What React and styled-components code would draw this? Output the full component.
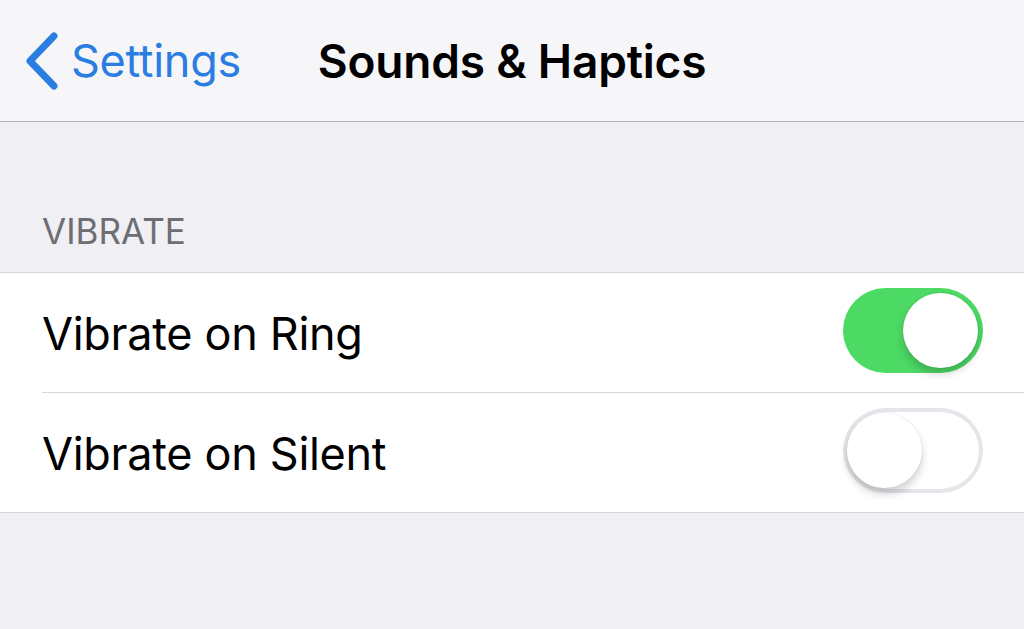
import React, { useState } from 'react';
import styled, { createGlobalStyle } from 'styled-components';

const GlobalStyle = createGlobalStyle`
  html, body {
    margin: 0;
    padding: 0;
    background: #efeff4;
    font-family: Inter, "Liberation Sans", sans-serif;
  }
`;

const Page = styled.div`
  width: 1024px;
  height: 629px;
  background: #efeff4;
  overflow: hidden;
`;

const NavBar = styled.div`
  display: grid;
  grid-template-columns: 1fr auto 1fr;
  align-items: center;
  height: 121px;
  background: #f6f6f8;
  border-bottom: 1px solid #b4b4b8;
`;

const BackButton = styled.div`
  display: flex;
  align-items: center;
  gap: 11px;
  padding-left: 24px;
  color: #2a7de1;
  font-size: 45px;
  letter-spacing: -0.3px;
`;

const Title = styled.div`
  font-size: 46px;
  font-weight: 600;
  color: #000;
  letter-spacing: -0.2px;
`;

const SectionHeader = styled.div`
  height: 151px;
  display: flex;
  align-items: flex-end;
  padding: 0 0 20px 42px;
  box-sizing: border-box;
  font-size: 35px;
  color: #6d6d72;
  letter-spacing: 0;
  border-bottom: 1px solid #d6d6da;
`;

const Group = styled.div`
  background: #fff;
  border-bottom: 1px solid #d6d6da;
`;

const Row = styled.div`
  display: flex;
  align-items: center;
  justify-content: space-between;
  height: 119px;
  padding-right: 41px;
  margin-left: 42px;
  border-bottom: ${p => (p.last ? 'none' : '1px solid #d8d8dc')};
`;

const Label = styled.div`
  font-size: 45px;
  color: #000;
  letter-spacing: -0.3px;
  margin-top: 2px;
`;

const Track = styled.div`
  position: relative;
  width: 140px;
  height: 85px;
  border-radius: 43px;
  box-sizing: border-box;
  background: ${p => (p.on ? '#4cd964' : '#fff')};
  box-shadow: ${p => (p.on ? 'none' : 'inset 0 0 0 4px #e5e5ea')};
  margin-top: -4px;
  cursor: pointer;
`;

const Knob = styled.div`
  position: absolute;
  top: 5px;
  left: ${p => (p.on ? '60px' : '4px')};
  width: 75px;
  height: 75px;
  border-radius: 50%;
  background: #fff;
  box-shadow: 0 6px 8px rgba(0, 0, 0, 0.18), 0 0 0 1px rgba(0, 0, 0, 0.04);
`;

const Switch = ({ on, onToggle }) => (
  <Track on={on ? 1 : 0} onClick={onToggle}>
    <Knob on={on ? 1 : 0} />
  </Track>
);

const Chevron = () => (
  <svg width="36" height="58" viewBox="0 0 36 58">
    <path d="M30 4 L6 29 L30 54" fill="none" stroke="#2a7de1" strokeWidth="7" strokeLinecap="round" strokeLinejoin="round" />
  </svg>
);

export default function App() {
  const [ring, setRing] = useState(true);
  const [silent, setSilent] = useState(false);
  return (
    <Page>
      <GlobalStyle />
      <NavBar>
        <BackButton>
          <Chevron />
          <span>Settings</span>
        </BackButton>
        <Title>Sounds &amp; Haptics</Title>
        <div />
      </NavBar>
      <SectionHeader>VIBRATE</SectionHeader>
      <Group>
        <Row>
          <Label>Vibrate on Ring</Label>
          <Switch on={ring} onToggle={() => setRing(!ring)} />
        </Row>
        <Row last>
          <Label>Vibrate on Silent</Label>
          <Switch on={silent} onToggle={() => setSilent(!silent)} />
        </Row>
      </Group>
    </Page>
  );
}
